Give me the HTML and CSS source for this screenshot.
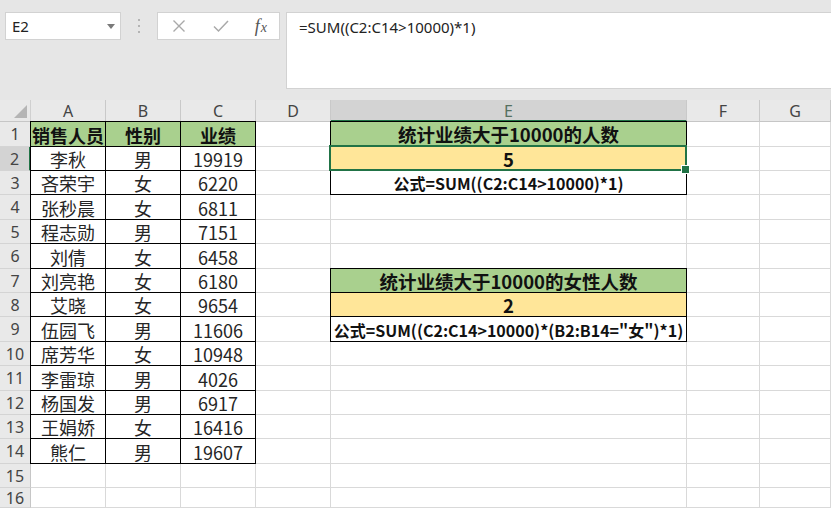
FILE: index.html
```html
<!DOCTYPE html>
<html lang="zh-CN">
<head>
<meta charset="utf-8">
<title>Excel</title>
<link rel="stylesheet" href="styles.css">
</head>
<body>
<div class="app">
  <div class="toolbar">
    <div class="namebox">
      <span class="name">E2</span>
      <svg class="dd" width="8" height="5" viewBox="0 0 8 5"><path d="M0 0 L8 0 L4 5 Z" fill="#7a7a7a"/></svg>
    </div>
    <div class="grip">
      <svg width="4" height="16" viewBox="0 0 4 16"><rect x="1" y="1" width="2" height="2" fill="#b4b4b4"/><rect x="1" y="7" width="2" height="2" fill="#b4b4b4"/><rect x="1" y="13" width="2" height="2" fill="#b4b4b4"/></svg>
    </div>
    <div class="fxbox">
      <svg class="ico" width="14" height="14" viewBox="0 0 14 14"><path d="M1.5 1.5 L12.5 12.5 M12.5 1.5 L1.5 12.5" stroke="#a9a9a9" stroke-width="1.4" fill="none"/></svg>
      <svg class="ico" width="16" height="14" viewBox="0 0 16 14"><path d="M1 7.5 L5.5 12 L15 2" stroke="#a9a9a9" stroke-width="1.5" fill="none"/></svg>
      <span class="fx"><i>f</i><i class="x">x</i></span>
    </div>
    <div class="formula">=SUM((C2:C14&gt;10000)*1)</div>
  </div>

  <div class="sheet">
    <!-- header row -->
    <div class="corner"><svg width="13" height="13" viewBox="0 0 13 13"><path d="M13 0 L13 13 L0 13 Z" fill="#b5b5b5"/></svg></div>
    <div class="ch">A</div><div class="ch">B</div><div class="ch">C</div><div class="ch">D</div><div class="ch sel">E</div><div class="ch">F</div><div class="ch">G</div>

    <!-- 1 -->
    <div class="rh">1</div>
    <div class="c t tl tt hd">销售人员</div><div class="c t tt hd">性别</div><div class="c t tt hd">业绩</div>
    <div class="c"></div>
    <div class="c t tl tt hd big">统计业绩大于10000的人数</div>
    <div class="c"></div><div class="c"></div>

    <!-- 2 -->
    <div class="rh sel">2</div>
    <div class="c t tl">李秋</div><div class="c t">男</div><div class="c t">19919</div>
    <div class="c"></div>
    <div class="c t tl yl big active">5</div>
    <div class="c"></div><div class="c"></div>

    <!-- 3 -->
    <div class="rh">3</div>
    <div class="c t tl">吝荣宇</div><div class="c t">女</div><div class="c t">6220</div>
    <div class="c"></div>
    <div class="c t tl fm">公式=SUM((C2:C14&gt;10000)*1)</div>
    <div class="c"></div><div class="c"></div>

    <!-- 4 -->
    <div class="rh">4</div>
    <div class="c t tl">张秒晨</div><div class="c t">女</div><div class="c t">6811</div>
    <div class="c"></div><div class="c"></div><div class="c"></div><div class="c"></div>

    <!-- 5 -->
    <div class="rh">5</div>
    <div class="c t tl">程志勋</div><div class="c t">男</div><div class="c t">7151</div>
    <div class="c"></div><div class="c"></div><div class="c"></div><div class="c"></div>

    <!-- 6 -->
    <div class="rh">6</div>
    <div class="c t tl">刘倩</div><div class="c t">女</div><div class="c t">6458</div>
    <div class="c"></div><div class="c"></div><div class="c"></div><div class="c"></div>

    <!-- 7 -->
    <div class="rh">7</div>
    <div class="c t tl">刘亮艳</div><div class="c t">女</div><div class="c t">6180</div>
    <div class="c"></div>
    <div class="c t tl tt hd big">统计业绩大于10000的女性人数</div>
    <div class="c"></div><div class="c"></div>

    <!-- 8 -->
    <div class="rh">8</div>
    <div class="c t tl">艾晓</div><div class="c t">女</div><div class="c t">9654</div>
    <div class="c"></div>
    <div class="c t tl yl big">2</div>
    <div class="c"></div><div class="c"></div>

    <!-- 9 -->
    <div class="rh">9</div>
    <div class="c t tl">伍园飞</div><div class="c t">男</div><div class="c t">11606</div>
    <div class="c"></div>
    <div class="c t tl fm">公式=SUM((C2:C14&gt;10000)*(B2:B14="女")*1)</div>
    <div class="c"></div><div class="c"></div>

    <!-- 10 -->
    <div class="rh">10</div>
    <div class="c t tl">席芳华</div><div class="c t">女</div><div class="c t">10948</div>
    <div class="c"></div><div class="c"></div><div class="c"></div><div class="c"></div>

    <!-- 11 -->
    <div class="rh">11</div>
    <div class="c t tl">李雷琼</div><div class="c t">男</div><div class="c t">4026</div>
    <div class="c"></div><div class="c"></div><div class="c"></div><div class="c"></div>

    <!-- 12 -->
    <div class="rh">12</div>
    <div class="c t tl">杨国发</div><div class="c t">男</div><div class="c t">6917</div>
    <div class="c"></div><div class="c"></div><div class="c"></div><div class="c"></div>

    <!-- 13 -->
    <div class="rh">13</div>
    <div class="c t tl">王娟娇</div><div class="c t">女</div><div class="c t">16416</div>
    <div class="c"></div><div class="c"></div><div class="c"></div><div class="c"></div>

    <!-- 14 -->
    <div class="rh">14</div>
    <div class="c t tl">熊仁</div><div class="c t">男</div><div class="c t">19607</div>
    <div class="c"></div><div class="c"></div><div class="c"></div><div class="c"></div>

    <!-- 15 -->
    <div class="rh">15</div>
    <div class="c"></div><div class="c"></div><div class="c"></div><div class="c"></div><div class="c"></div><div class="c"></div><div class="c"></div>

    <!-- 16 -->
    <div class="rh">16</div>
    <div class="c"></div><div class="c"></div><div class="c"></div><div class="c"></div><div class="c"></div><div class="c"></div><div class="c"></div>
  </div>
</div>
</body>
</html>
```

FILE: styles.css
```css
* { box-sizing: border-box; }
html, body { margin: 0; padding: 0; }
body {
  width: 831px;
  height: 508px;
  overflow: hidden;
  background: #ffffff;
  font-family: "Noto Sans", "Noto Sans CJK SC", sans-serif;
}
.app {
  width: 831px;
  height: 508px;
  overflow: hidden;
  background: #e6e6e6;
}

/* ---------- toolbar ---------- */
.toolbar {
  height: 100px;
  display: flex;
  align-items: flex-start;
  padding: 12px 0 0 5px;
}
.namebox {
  width: 118px;
  height: 28px;
  background: #fff;
  border: 1px solid #d2d2d2;
  display: flex;
  align-items: center;
  justify-content: space-between;
  padding: 0 5px 0 6px;
}
.name {
  font-family: "Noto Sans", sans-serif;
  font-size: 15px;
  color: #222;
}
.dd { margin-top: 1px; }
.grip {
  width: 37px;
  height: 28px;
  display: flex;
  align-items: center;
  justify-content: center;
}
.fxbox {
  width: 126px;
  height: 28px;
  background: #fff;
  border: 1px solid #d2d2d2;
  display: flex;
  align-items: center;
  padding: 0 0 0 14px;
}
.fxbox .ico:first-child { margin-right: 27px; }
.fxbox .ico:nth-child(2) { margin-right: 26px; }
.fx {
  font-family: "Liberation Serif", "DejaVu Serif", serif;
  font-size: 18px;
  color: #555;
  line-height: 1;
}
.fx i { font-style: italic; }
.fx .x { font-size: 14px; margin-left: 1px; }
.formula {
  margin-left: 6px;
  width: 545px;
  height: 77px;
  background: #fff;
  border: 1px solid #d2d2d2;
  border-right: none;
  padding: 4px 0 0 12px;
  font-family: "Noto Sans", sans-serif;
  font-size: 15px;
  color: #222;
  flex-shrink: 0;
}

/* ---------- sheet grid ---------- */
.sheet {
  display: grid;
  grid-template-columns: 31px 75px 75px 75px 75px 356px 73px 71px;
  grid-template-rows: 22px 25px 24px 24px 25px 24px 25px 24px 24px 25px 24px 25px 24px 24px 25px 24px 20px;
  background: #fff;
}
.corner {
  background: #e9e9e9;
  border-right: 1px solid #d0d0d0;
  border-bottom: 1px solid #c6c6c6;
  display: flex;
  align-items: flex-end;
  justify-content: flex-end;
  padding: 0 3px 3px 0;
}
.ch {
  background: #e9e9e9;
  border-right: 1px solid #c9c9c9;
  border-bottom: 1px solid #c6c6c6;
  display: flex;
  align-items: center;
  justify-content: center;
  font-family: "Noto Sans", sans-serif;
  font-size: 16px;
  color: #444;
  line-height: 1;
  padding-top: 1px;
}
.ch.sel {
  background: #d3d3d3;
  border-bottom: 2px solid #217346;
  color: #55705f;
}
.rh {
  background: #e9e9e9;
  border-right: 1px solid #c6c6c6;
  border-bottom: 1px solid #d4d4d4;
  display: flex;
  align-items: center;
  justify-content: center;
  font-family: "Noto Sans", sans-serif;
  font-size: 16px;
  color: #444;
  line-height: 1;
}
.rh.sel {
  background: #d3d3d3;
  border-right: 2px solid #217346;
}
.c {
  background: #fff;
  border-right: 1px solid #d9d9d9;
  border-bottom: 1px solid #d9d9d9;
  display: flex;
  align-items: center;
  justify-content: center;
  font-family: "Noto Sans CJK SC", sans-serif;
  font-size: 18px;
  color: #262626;
  line-height: 1;
  white-space: nowrap;
  padding-top: 1px;
}
.t {
  border-right-color: #000;
  border-bottom-color: #000;
}
.tl { box-shadow: -1px 0 0 #000; }
.tt { box-shadow: 0 -1px 0 #000; }
.tl.tt { box-shadow: -1px 0 0 #000, 0 -1px 0 #000, -1px -1px 0 #000; }
.hd {
  background: #a9d08e;
  font-weight: 700;
  color: #111;
}
.yl {
  background: #ffe699;
  font-weight: 700;
  color: #111;
}
.big { font-size: 18.5px; }
.fm {
  font-weight: 700;
  font-size: 16px;
  color: #111;
  overflow: visible;
}
.active { position: relative; }
.active::after {
  content: "";
  position: absolute;
  top: -2px;
  left: -2px;
  right: -1px;
  bottom: -1px;
  border: 2px solid #217346;
}
.active::before {
  content: "";
  position: absolute;
  right: -4px;
  bottom: -4px;
  width: 7px;
  height: 7px;
  background: #217346;
  border: 1px solid #fff;
  z-index: 2;
}
```
